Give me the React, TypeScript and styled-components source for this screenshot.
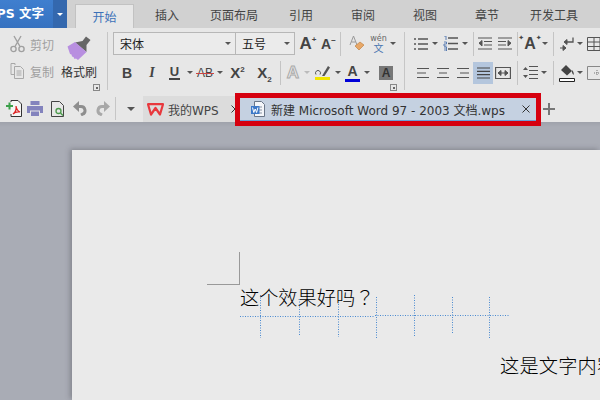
import React from "react";
import styled, { createGlobalStyle } from "styled-components";

const UI = `"DejaVu Sans", "Noto Sans CJK SC", sans-serif`;
const CJK = `"Noto Sans CJK SC", "Noto Sans", sans-serif`;
const INK = "#555";

const Global = createGlobalStyle`
  html, body { margin: 0; padding: 0; background: #a9acb5; }
  #root { width: 600px; height: 400px; overflow: hidden; }
`;

const Shell = styled.div`
  width: 600px; height: 400px; overflow: hidden;
  display: flex; flex-direction: column;
  font-family: ${CJK};
`;

/* Title row */
const TabStrip = styled.header`
  height: 28px; flex: none; display: flex; align-items: flex-end;
  background: #d1d1d1;
`;
const AppButton = styled.div`
  width: 53px; height: 28px; box-sizing: border-box; overflow: hidden;
  background: linear-gradient(#3f7fcf, #3672c0);
  color: #fff; font: bold 12.5px/28px ${UI}; white-space: nowrap;
  display: flex; justify-content: flex-end; padding-right: 9px;
  span { flex: none; }
`;
const AppCaret = styled.div`
  width: 14px; height: 28px; background: #3468ae; margin-right: 7px;
  display: flex; align-items: center; justify-content: center;
`;
const RibbonTab = styled.div<{ $active?: boolean; $w?: number }>`
  width: ${p => p.$w ?? 62}px; height: ${p => (p.$active ? 24 : 28)}px; box-sizing: border-box;
  text-align: center; font-size: 12px; line-height: ${p => (p.$active ? 23 : 29)}px;
  color: ${p => (p.$active ? "#3c71b8" : "#444")};
  background: ${p => (p.$active ? "#e7e7e7" : "transparent")};
  ${p => p.$active && `border: 1px solid #c2c2c2; border-bottom: 0; width: 59px; margin: 0 2px 0 1px;`}
`;

/* Ribbon */
const Ribbon = styled.section`
  height: 64px; flex: none; display: flex; background: #e7e7e7; overflow: hidden;
`;
const Group = styled.div<{ $w: number; $pad: number; $last?: boolean }>`
  width: ${p => p.$w}px; flex: none; box-sizing: border-box; position: relative;
  margin: 4px 0 2px; padding-left: ${p => p.$pad}px;
  ${p => !p.$last && `border-right: 1px solid #c6c6c6;`}
`;
const ClipGrid = styled.div`
  display: grid; grid-template-columns: 51px 37px; height: 100%;
`;
const ClipColumn = styled.div`
  display: flex; flex-direction: column; gap: 7px; padding-top: 2px;
`;
const ClipItem = styled.div<{ $muted?: boolean }>`
  display: flex; align-items: center; gap: 5px; height: 20px;
  font-size: 12px; color: ${p => (p.$muted ? "#a0a0a0" : "#333")};
`;
const BrushColumn = styled.div`
  display: flex; flex-direction: column; align-items: center; margin-left: -1px;
  font-size: 12px; color: #333; line-height: 17px;
  svg { margin: 4px 0 3px; }
`;
const Launcher = styled.div`
  position: absolute; right: 7px; bottom: -1px;
  width: 5px; height: 5px; border: 1px solid #888;
  &::after { content: ""; display: block; width: 2px; height: 2px; margin: 2px 0 0 2px; background: #666; }
`;
const ToolRows = styled.div`
  display: flex; flex-direction: column; gap: 5px;
`;
const Row = styled.div<{ $h: number }>`
  display: flex; align-items: center; height: ${p => p.$h}px;
`;
const Combo = styled.div<{ $w: number }>`
  width: ${p => p.$w}px; height: 23px; box-sizing: border-box; flex: none;
  border: 1px solid #b7b7b7; background: #ebebeb; margin-right: -1px;
  display: flex; align-items: center; justify-content: space-between;
  padding: 0 4px 0 6px; font-size: 12px; color: #222;
`;
const Tool = styled.div<{ $w: number; $on?: boolean }>`
  width: ${p => p.$w}px; height: ${p => (p.$on ? 22 : 24)}px; flex: none;
  display: flex; align-items: center; justify-content: center;
  background: ${p => (p.$on ? "#b4c6dd" : "transparent")};
`;
const Sep = styled.div<{ $w: number }>`
  width: ${p => p.$w}px; height: 24px; flex: none; position: relative;
  display: flex; justify-content: center;
  &::before { content: ""; width: 1px; background: #c4c4c4; }
`;
const Caret = styled.span<{ $c?: string; $s?: number }>`
  display: block; width: 0; height: 0;
  border-left: ${p => p.$s ?? 3}px solid transparent;
  border-right: ${p => p.$s ?? 3}px solid transparent;
  border-top: ${p => p.$s ?? 3}px solid ${p => p.$c ?? INK};
`;
const Glyph = styled.span<{ $size?: number; $italic?: boolean; $color?: string; $serif?: boolean }>`
  font: ${p => (p.$italic ? "italic" : "normal")} bold ${p => p.$size ?? 14}px/1 ${p => (p.$serif ? `"Liberation Serif", serif` : `"Liberation Sans", sans-serif`)};
  color: ${p => p.$color ?? "#444"};
  position: relative; white-space: nowrap;
  sup, sub { font-size: 8px; line-height: 0; font-weight: bold; }
`;
const Spark = styled.span`
  font: 7px/1 "DejaVu Sans", sans-serif; vertical-align: 9px; color: #444;
`;
const Underlined = styled(Glyph)`
  border-bottom: 2px solid #444; padding: 0 1px; line-height: 12px;
`;
const Struck = styled(Glyph)`
  font-size: 12px; font-weight: normal;
  &::after { content: ""; position: absolute; left: -1px; right: -1px; top: 6px; height: 1px; background: #c44; }
`;
const Outlined = styled(Glyph)`
  font-size: 17px; color: #e9e9e9; -webkit-text-stroke: 1px #aaa;
`;
const Bar = styled.span<{ $c: string }>`
  display: block; width: 15px; height: 3px; background: ${p => p.$c}; margin-top: 1px;
`;
const Stack = styled.span`
  display: flex; flex-direction: column; align-items: center; line-height: 1;
`;
const BoxedA = styled.span`
  width: 14px; height: 14px; background: #777; color: #333; display: block;
  text-align: center; font: bold 12px/14px "Liberation Sans", sans-serif;
`;
const Pinyin = styled.span`
  font: 8px/8px "DejaVu Sans", sans-serif; color: #666;
`;
const WenChar = styled.span`
  font-size: 10px; line-height: 10px; color: #4a76b0;
`;

/* Quick access + document tabs */
const QuickBar = styled.nav`
  height: 30px; flex: none; display: flex; align-items: center; box-sizing: border-box;
  background: #e7e7e7; padding: 3px 0 0 5px; position: relative; z-index: 2;
`;
const QuickTool = styled.div<{ $w: number }>`
  width: ${p => p.$w}px; flex: none; display: flex; justify-content: center; align-items: center;
`;
const QuickSep = styled.div`
  width: 1px; height: 23px; background: #c6c6c6; margin: 0 9px 0 1px; flex: none;
`;
const HomeTab = styled.div`
  width: 92px; height: 26px; align-self: flex-end; flex: none; box-sizing: border-box;
  margin-left: 7px; background: #dcdcdc; display: flex; align-items: center; gap: 4px;
  padding-left: 4px; font: 12px ${UI}; color: #444; white-space: nowrap;
`;
const HomeClose = styled.span`
  margin: 0 -4px 0 auto; display: flex;
`;
const DocTab = styled.div`
  width: 296px; height: 23px; flex: none; box-sizing: border-box;
  margin: 2px 0 0 5px; background: #c5d1e1; border-bottom: 1px solid #6d9fd6;
  outline: 5px solid #d6000f; position: relative; z-index: 3;
  display: flex; align-items: center; padding-left: 11px;
  font: 12px ${UI}; color: #333; white-space: nowrap;
`;
const DocName = styled.span`
  margin-left: 6px; flex: 1;
`;
const DocClose = styled.span`
  margin-right: 6px; display: flex;
`;
const Plus = styled.div`
  margin-left: 7px; width: 12px; height: 12px; flex: none; position: relative;
  background:
    linear-gradient(#777, #777) center / 12px 2px no-repeat,
    linear-gradient(#777, #777) center / 2px 12px no-repeat;
`;

/* Document */
const Workspace = styled.main`
  flex: 1; display: flex; min-height: 0; padding: 28px 0 0 72px;
  background: linear-gradient(#9fa2ab, #a9acb5 5px);
`;
const Page = styled.article`
  flex: 1; background: #eaeaea; box-shadow: -2px -1px 5px rgba(60,60,70,.35);
  padding-top: 102px; font-size: 19.2px; font-weight: 300; color: #000; line-height: 24px; white-space: nowrap;
  overflow: hidden;
`;
const CropMark = styled.div`
  width: 32px; height: 32px; margin-left: 135px; border: solid #999; border-width: 0 1px 1px 0;
`;
const Line = styled.p<{ $left: number; $top?: number; $track?: number }>`
  margin: ${p => p.$top ?? 0}px 0 0 ${p => p.$left}px; position: relative;
  letter-spacing: ${p => p.$track ?? 0}px;
`;
const Punct = styled.span`
  font-family: "Noto Sans CJK TC", sans-serif;
`;
const Dotted = styled.svg`
  display: block; margin: -14px 0 0 168px; position: relative;
`;

const I = styled.svg`display: block; flex: none;`;
const s = { fill: "none", stroke: INK, strokeWidth: 1 };

const Scissors = () => (
  <I width="15" height="18" viewBox="0 0 15 18" fill="none" stroke="#a0a0a0" strokeWidth="1.4">
    <circle cx="3.5" cy="14" r="2.6" /><circle cx="11.5" cy="14" r="2.6" />
    <path d="M5 11.5 11 1M10 11.5 4 1" />
  </I>
);
const CopyIcon = () => (
  <I width="15" height="18" viewBox="0 0 15 18" fill="none" stroke="#a8a8a8">
    <path d="M5 3V1.5H1v11h3" /><path d="M4.5 4.5h6l3 3v9h-9zM6.500 9h5M6.500 11h5M6.500 13h5" />
  </I>
);
const Brush = () => (
  <I width="25" height="24" viewBox="0 0 25 24">
    <path d="M8 6.500 15.500 5 19 .5 23.500 4 19.500 9 19.500 16z" fill="#666" />
    <path d="M.5 10.500 8 6l11.500 10L11 24l-2-1.500-1.500.5-1-2-1.500-.5-.5-2-1.500-.5z" fill="#b88fe0" />
  </I>
);
const Bullets = () => (
  <I width="15" height="14" viewBox="0 0 15 14" {...s}>
    <path d="M5 2h10M5 7h10M5 12h10" strokeWidth="1.3" />
    <path d="M1 2h2M2 1v2M1 7h2M2 6v2M1 12h2M2 11v2" />
  </I>
);
const Numbers = () => (
  <I width="15" height="15" viewBox="0 0 15 15">
    <path d="M5 2h10M5 7.500h10M5 13h10" stroke={INK} strokeWidth="1.3" />
    <path d="M1 0h2v4M1 6h2.500v2H1v2h2.500M1 11h2.500v4H1M1 13h2" fill="none" stroke="#3d68a8" strokeWidth=".8" />
  </I>
);
const Indent = ({ flip }: { flip?: boolean }) => (
  <I width="14" height="13" viewBox="0 0 14 13" style={flip ? { transform: "scaleX(-1)" } : undefined} {...s}>
    <path d="M0 1h14M6 4.500h8M6 8h8M0 12h14" strokeWidth="1.2" />
    <path d="M4 3.500 1 6.200 4 9zM1 6.200h3" fill={INK} />
  </I>
);
const AlignIcon = ({ kind }: { kind: "l" | "c" | "r" | "j" }) => {
  const short = kind === "l" ? "M0 6h9" : kind === "c" ? "M2 6h8" : kind === "r" ? "M3 6h9" : "M0 6h12";
  return (
    <I width="12" height="11" viewBox="0 0 12 11" {...s}>
      <path d={`M0 1.500h12${short}M0 10.500h12`} strokeWidth="1.1" />
    </I>
  );
};
const Justify = () => (
  <I width="13" height="12" viewBox="0 0 13 12" stroke="#444" strokeWidth="1.2">
    <path d="M0 1h13M0 4.300h13M0 7.600h13M0 11h13" />
  </I>
);
const Distribute = () => (
  <I width="16" height="12" viewBox="0 0 16 12" {...s}>
    <path d="M.5 0v12M15.500 0v12" strokeWidth="1.3" />
    <path d="M0 .5h16M0 11.500h16" />
    <path d="M3 6h10" /><path d="M6 3.500 3 6l3 2.500zM10 3.500 13 6l-3 2.500z" fill={INK} />
  </I>
);
const Spacing = () => (
  <I width="15" height="15" viewBox="0 0 15 15" {...s}>
    <path d="M6 1.500h9M6 5.500h9M6 9.500h9M6 13.500h9" strokeWidth="1.2" />
    <path d="M0 5 2.500 2 5 5zM0 10l2.500 3L5 10z" fill={INK} stroke="none" />
  </I>
);
const WrapArrow = () => (
  <I width="14" height="14" viewBox="0 0 14 14" {...s}>
    <path d="M13 .5V5H7" strokeWidth="1.3" />
    <path d="M7 2.500 4 5l3 2.500zM0 11h6M3 8.500 6 11l-3 2.500z" fill={INK} />
  </I>
);
const TableGrid = () => (
  <I width="20" height="14" viewBox="0 0 20 14" {...s}>
    <path d="M.5.5h19v13H.5zM.5 5h19M.5 9.500h19M7 .5v13M13 .5v13" />
  </I>
);
const DotGrid = () => (
  <I width="20" height="14" viewBox="0 0 20 14" fill="none" stroke="#888">
    <path d="M.5.5h19v13H.5z" />
    <path d="M7 7h6M10 4v6" stroke="#777" strokeDasharray="1 1" />
  </I>
);
const Bucket = () => (
  <I width="16" height="18" viewBox="0 0 16 18">
    <path d="M2 6 7 1l6 6-5 4.500z" fill="#444" /><path d="M13 6c2 2 2 4 1.500 5-1-1-2-3-1.500-5" fill="#444" />
    <path d="M.5 14.500h15v3H.5z" fill="#fff" stroke="#222" />
  </I>
);
const EraserA = () => (
  <I width="16" height="17" viewBox="0 0 16 17">
    <path d="M1 10 4.500 1 8 10M2.500 7h4" fill="none" stroke="#999" />
    <path d="m6 11 5-4 4 3-5 5z" fill="#e8a868" stroke="#b87838" strokeWidth=".6" />
  </I>
);
const Highlighter = () => (
  <Stack>
    <I width="15" height="11" viewBox="0 0 15 11">
      <path d="M7 11 13 1l2 1.500L9.500 11z" fill="#555" />
      <path d="M1 9.500a2.500 2.500 0 1 1 4 0" fill="none" stroke="#555" />
    </I>
    <Bar $c="#f2e500" />
  </Stack>
);
const PdfIcon = () => (
  <I width="16" height="17" viewBox="0 0 16 17">
    <path d="M5 2V.5h7L15.500 4v12.500H5V14" fill="#f5f5f5" stroke="#333" />
    <path d="M0 5h2.500V2.500h2V5H7v2H4.500v2.500h-2V7H0z" fill="#3ca04a" />
    <path d="M7 14c3-2 3.500-5 3-8 .5 3 1.500 5 4 6-3-.5-5 0-7 2z" fill="none" stroke="#d22" strokeWidth="1.2" />
  </I>
);
const PrintIcon = () => (
  <I width="16" height="15" viewBox="0 0 16 15">
    <path d="M3.500 0h9v4h-9zM0 5h16v7h-3v-2.500H3V12H0zM4 10.500h8V15H4z" fill="#8383bd" />
  </I>
);
const PreviewIcon = () => (
  <I width="13" height="16" viewBox="0 0 13 16" fill="none">
    <path d="M.5.500h8l4 4v11H.5z" stroke="#444" />
    <circle cx="7.500" cy="10" r="2.500" stroke="#4c9a4c" strokeWidth="1.3" />
    <path d="m9.500 12 2.500 2.500" stroke="#4c9a4c" strokeWidth="1.5" />
  </I>
);
const Undo = ({ flip }: { flip?: boolean }) => (
  <I width="14" height="15" viewBox="0 0 14 15" fill="none" style={flip ? { transform: "scaleX(-1)" } : undefined}>
    <path d="M3 5.500h5a4 4 0 0 1 1.500 7.700L8 14" stroke={flip ? "#a8a8a8" : "#8e8e8e"} strokeWidth="3" />
    <path d="M6 0v11L0 5.500z" fill={flip ? "#a8a8a8" : "#8e8e8e"} />
  </I>
);
const WpsLogo = () => (
  <I width="17" height="13" viewBox="0 0 17 13" fill="none">
    <path d="M1 1.200h15L13 11.500 8.500 5 4 11.500z" stroke="#e8383d" strokeWidth="2.2" strokeLinejoin="round" />
  </I>
);
const DocIcon = () => (
  <I width="14" height="16" viewBox="0 0 14 16">
    <path d="M3.500.5h7l3 3v12h-10z" fill="#f4f6fa" stroke="#6a7688" />
    <path d="M6 6h5M6 9h5M6 12h5" stroke="#8a94a4" />
    <path d="M0 5h8.500v8H0z" fill="#3c78c8" />
    <path d="m1.500 6.500 1.300 5 1.400-3.500 1.400 3.500 1.300-5" fill="none" stroke="#fff" />
  </I>
);
const XMark = () => (
  <I width="8" height="8" viewBox="0 0 8 8" stroke="#333"><path d="m.5.500 7 7M7.500.5l-7 7" /></I>
);

const App = () => (
  <Shell>
    <Global />
    <TabStrip>
      <AppButton><span>PS 文字</span></AppButton>
      <AppCaret><Caret $c="#fff" /></AppCaret>
      <RibbonTab $active>开始</RibbonTab>
      <RibbonTab>插入</RibbonTab>
      <RibbonTab $w={72}>页面布局</RibbonTab>
      <RibbonTab>引用</RibbonTab>
      <RibbonTab>审阅</RibbonTab>
      <RibbonTab>视图</RibbonTab>
      <RibbonTab>章节</RibbonTab>
      <RibbonTab $w={72}>开发工具</RibbonTab>
    </TabStrip>

    <Ribbon>
      <Group $w={108} $pad={10}>
        <ClipGrid>
          <ClipColumn>
            <ClipItem $muted><Scissors />剪切</ClipItem>
            <ClipItem $muted><CopyIcon />复制</ClipItem>
          </ClipColumn>
          <BrushColumn>
            <Brush />
            格式刷
          </BrushColumn>
        </ClipGrid>
        <Launcher />
      </Group>

      <Group $w={297} $pad={5}>
        <ToolRows>
          <Row $h={23}>
            <Combo $w={123}>宋体<Caret /></Combo>
            <Combo $w={60}>五号<Caret /></Combo>
            <Tool $w={28}><Glyph $size={17}>A<sup>+</sup></Glyph></Tool>
            <Tool $w={13}><Glyph $size={14}>A<sup>−</sup></Glyph></Tool>
            <Sep $w={10} />
            <Tool $w={23}><EraserA /></Tool>
            <Tool $w={21}>
              <Stack><Pinyin>wén</Pinyin><WenChar>文</WenChar></Stack>
            </Tool>
            <Tool $w={8}><Caret /></Tool>
          </Row>
          <Row $h={25}>
            <Tool $w={28}><Glyph $size={14}>B</Glyph></Tool>
            <Tool $w={22}><Glyph $size={14} $italic $serif>I</Glyph></Tool>
            <Tool $w={23}><Underlined $size={13}>U</Underlined></Tool>
            <Tool $w={8}><Caret /></Tool>
            <Tool $w={22}><Struck>AB</Struck></Tool>
            <Tool $w={8}><Caret /></Tool>
            <Tool $w={27}><Glyph $size={15}>X<sup>2</sup></Glyph></Tool>
            <Tool $w={27}><Glyph $size={15}>X<sub>2</sub></Glyph></Tool>
            <Sep $w={5} />
            <Tool $w={20}><Outlined>A</Outlined></Tool>
            <Tool $w={8}><Caret $c="#bbb" /></Tool>
            <Tool $w={23}><Highlighter /></Tool>
            <Tool $w={8}><Caret /></Tool>
            <Tool $w={21}>
              <Stack><Glyph $size={14}>A</Glyph><Bar $c="#0000d8" /></Stack>
            </Tool>
            <Tool $w={8}><Caret /></Tool>
            <Tool $w={30}><BoxedA>A</BoxedA></Tool>
          </Row>
        </ToolRows>
        <Launcher />
      </Group>

      <Group $w={195} $pad={8} $last>
        <ToolRows>
          <Row $h={23}>
            <Tool $w={14}><Bullets /></Tool>
            <Tool $w={16}><Caret /></Tool>
            <Tool $w={14}><Numbers /></Tool>
            <Tool $w={15}><Caret /></Tool>
            <Sep $w={3} />
            <Tool $w={19}><Indent /></Tool>
            <Tool $w={21}><Indent flip /></Tool>
            <Sep $w={4} />
            <Tool $w={22}><Glyph $size={16}><Spark>✦</Spark>A<Spark>✦</Spark></Glyph></Tool>
            <Tool $w={7}><Caret /></Tool>
            <Sep $w={10} />
            <Tool $w={17}><WrapArrow /></Tool>
            <Tool $w={9}><Caret /></Tool>
            <Tool $w={26}><TableGrid /></Tool>
          </Row>
          <Row $h={25}>
            <Tool $w={19}><AlignIcon kind="l" /></Tool>
            <Tool $w={21}><AlignIcon kind="c" /></Tool>
            <Tool $w={20}><AlignIcon kind="r" /></Tool>
            <Tool $w={20} $on><Justify /></Tool>
            <Tool $w={20}><Distribute /></Tool>
            <Sep $w={8} />
            <Tool $w={18}><Spacing /></Tool>
            <Tool $w={9}><Caret /></Tool>
            <Sep $w={10} />
            <Tool $w={17}><Bucket /></Tool>
            <Tool $w={9}><Caret /></Tool>
            <Tool $w={26}><DotGrid /></Tool>
          </Row>
        </ToolRows>
      </Group>
    </Ribbon>

    <QuickBar>
      <QuickTool $w={18}><PdfIcon /></QuickTool>
      <QuickTool $w={23}><PrintIcon /></QuickTool>
      <QuickTool $w={23}><PreviewIcon /></QuickTool>
      <QuickTool $w={22}><Undo /></QuickTool>
      <QuickTool $w={23}><Undo flip /></QuickTool>
      <QuickSep />
      <QuickTool $w={11}><Caret $s={4.5} /></QuickTool>
      <HomeTab>
        <WpsLogo />我的WPS<HomeClose><XMark /></HomeClose>
      </HomeTab>
      <DocTab>
        <DocIcon />
        <DocName>新建 Microsoft Word 97 - 2003 文档.wps</DocName>
        <DocClose><XMark /></DocClose>
      </DocTab>
      <Plus />
    </QuickBar>

    <Workspace>
      <Page>
        <CropMark />
        <Line $left={168}>这个效果好吗<Punct>？</Punct></Line>
        <Dotted width="272" height="44" viewBox="0 0 272 44" fill="none" stroke="#4a8ad0" strokeDasharray="1 1.500">
          <path d="M0 21.500H135" />
          <path d="M135 20.500H270" />
          <path d="M20.500 0v43M59.500 4v37M98.500 4v38M136.500 2v41M174.500 0v41M212.500 2v37M249.500 2v41" />
        </Dotted>
        <Line $left={428} $top={14} $track={0.2}>这是文字内容</Line>
      </Page>
    </Workspace>
  </Shell>
);

export default App;
